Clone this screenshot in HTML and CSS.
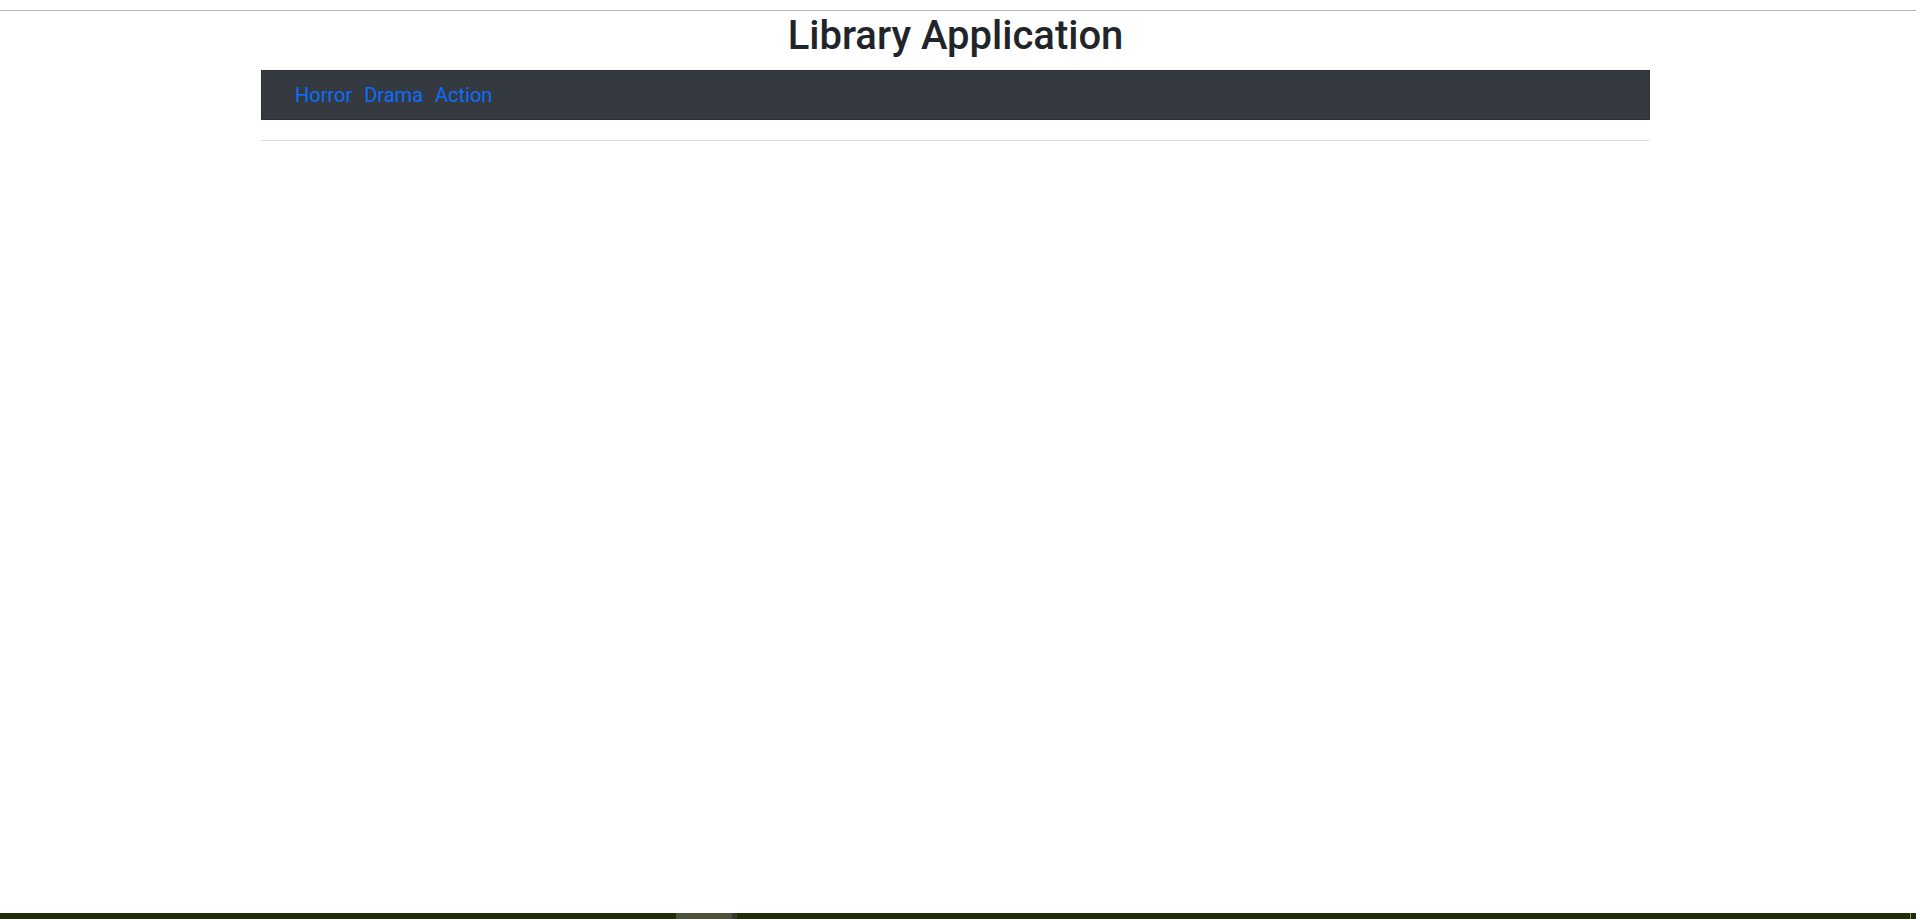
FILE: index.html
```html
<!DOCTYPE html>
<html lang="en">
<head>
<meta charset="utf-8">
<title>Library Application</title>
<link rel="stylesheet" href="styles.css">
</head>
<body>
<div class="page">
  <div class="topline"></div>
  <main class="container">
    <h1 class="title">Library Application</h1>
    <nav class="navbar">
      <a class="nav-link" href="#">Horror</a>
      <a class="nav-link" href="#">Drama</a>
      <a class="nav-link" href="#">Action</a>
    </nav>
    <hr class="divider">
  </main>
  <div class="taskbar">
    <div class="tb-left"></div>
    <div class="tb-active"></div>
    <div class="tb-sep"></div>
    <div class="tb-rest"></div>
    <div class="tb-edge"></div>
  </div>
</div>
</body>
</html>
```
FILE: styles.css
```css
* { box-sizing: border-box; }
html, body { margin: 0; padding: 0; background: #fff; }
body {
  font-family: Roboto, "Liberation Sans", Arial, sans-serif;
  color: #212529;
}
.page {
  min-height: 100vh;
  display: flex;
  flex-direction: column;
}
.topline {
  margin-top: 10px;
  height: 1px;
  background: #b4b4b4;
}
.container {
  width: 1389px;
  margin-left: 261px;
}
.title {
  margin: 1px 0 10px;
  font-size: 40px;
  font-weight: 500;
  line-height: 48px;
  text-align: center;
  color: #212529;
}
.navbar {
  height: 50px;
  background: #343a40;
  border: 1px solid #2b3035;
  display: flex;
  align-items: center;
  gap: 12px;
  padding-left: 33px;
}
.nav-link {
  font-size: 20px;
  line-height: 24px;
  color: #0d6efd;
  text-decoration: none;
}
.divider {
  margin: 20px 0 0;
  border: 0;
  height: 1px;
  background: #e2e2e2;
}
.taskbar {
  margin-top: auto;
  height: 6px;
  display: flex;
  background: #1f2a06;
}
.tb-left { width: 676px; background: #1f2a06; }
.tb-active { width: 56px; background: #4b5239; }
.tb-sep { width: 5px; background: #33392a; }
.tb-rest { flex: 1; background: #1f2a08; }
.tb-edge { width: 1px; background: #8a8f80; margin-right: 5px; }
```
